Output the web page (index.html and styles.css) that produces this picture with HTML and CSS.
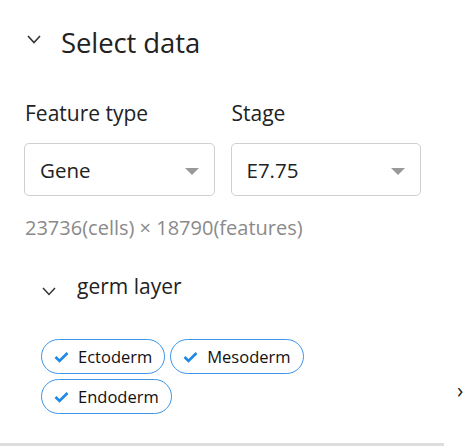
FILE: index.html
```html
<!DOCTYPE html>
<html>
<head>
<meta charset="utf-8">
<link rel="stylesheet" href="styles.css">
</head>
<body>
<div class="panel">
  <div class="header">
    <svg class="chev" width="14" height="9" viewBox="0 0 14 9"><path d="M1 1 L7 7.5 L13 1" fill="none" stroke="#333" stroke-width="1.6"/></svg>
    <span class="title">Select data</span>
  </div>
  <div class="fields">
    <div class="field">
      <div class="label">Feature type</div>
      <div class="select"><span>Gene</span><span class="caret"></span></div>
    </div>
    <div class="field">
      <div class="label">Stage</div>
      <div class="select"><span>E7.75</span><span class="caret"></span></div>
    </div>
  </div>
  <div class="dims">23736(cells) × 18790(features)</div>
  <div class="sub">
    <svg class="chev2" width="14" height="9" viewBox="0 0 14 9"><path d="M1 1 L7 7.5 L13 1" fill="none" stroke="#333" stroke-width="1.5"/></svg>
    <span class="subtitle">germ layer</span>
  </div>
  <div class="chips">
    <div class="chip"><svg width="15" height="12" viewBox="0 0 15 12"><path d="M1.5 6 L5.5 10 L13.5 2" fill="none" stroke="#1e88e5" stroke-width="2.6"/></svg><span>Ectoderm</span></div>
    <div class="chip"><svg width="15" height="12" viewBox="0 0 15 12"><path d="M1.5 6 L5.5 10 L13.5 2" fill="none" stroke="#1e88e5" stroke-width="2.6"/></svg><span>Mesoderm</span></div>
    <div class="chip"><svg width="15" height="12" viewBox="0 0 15 12"><path d="M1.5 6 L5.5 10 L13.5 2" fill="none" stroke="#1e88e5" stroke-width="2.6"/></svg><span>Endoderm</span></div>
  </div>
  <span class="stray">›</span>
</div>
<div class="bottom-line"></div>
</body>
</html>
```
FILE: styles.css
```css
html, body {
  margin: 0;
  padding: 0;
  background: #fff;
  width: 464px;
  height: 446px;
  overflow: hidden;
  font-family: "Open Sans", "Noto Sans", sans-serif;
  color: #222;
}
.panel {
  position: relative;
  height: 443px;
  padding-left: 24px;
  box-sizing: border-box;
}
.header {
  display: flex;
  align-items: center;
  height: 84px;
}
.chev {
  margin-left: 3px;
  margin-top: -5px;
}
.title {
  margin-left: 20px;
  font-size: 27.5px;
  color: #222;
  letter-spacing: -0.1px;
}
.fields {
  display: flex;
  gap: 16px;
  padding-top: 15px;
}
.field {
  width: 190.5px;
}
.label {
  font-size: 21px;
  line-height: 28px;
  padding-left: 1px;
  color: #222;
}
.select {
  margin-top: 16px;
  height: 53px;
  box-sizing: border-box;
  border: 1px solid #cfcfcf;
  border-radius: 5px;
  display: flex;
  align-items: center;
  justify-content: space-between;
  padding: 0 15px 0 15px;
  font-size: 20.5px;
  color: #222;
}
.caret {
  width: 0;
  height: 0;
  border-left: 7px solid transparent;
  border-right: 7px solid transparent;
  border-top: 7px solid #999;
  margin-top: 3px;
}
.dims {
  margin-top: 20px;
  font-size: 20px;
  line-height: 24px;
  color: #8a8a8a;
  padding-left: 1px;
}
.sub {
  display: flex;
  align-items: center;
  margin-top: 32px;
  height: 28px;
  padding-left: 18px;
}
.chev2 {
  margin-top: 10px;
}
.subtitle {
  margin-left: 21px;
  font-size: 21px;
  line-height: 28px;
  color: #222;
}
.chips {
  display: flex;
  flex-wrap: wrap;
  gap: 5px;
  width: 300px;
  margin-top: 39px;
  padding-left: 17px;
}
.chip {
  display: flex;
  align-items: center;
  height: 35px;
  box-sizing: border-box;
  border: 1px solid #3d95e8;
  border-radius: 18px;
  padding: 0 12px 0 12px;
  font-size: 16.5px;
  color: #111;
}
.chip svg {
  margin-right: 9px;
}
.stray {
  position: absolute;
  left: 457px;
  top: 376px;
  font-size: 21px;
  color: #222;
}
.bottom-line {
  width: 444px;
  height: 3px;
  background: #dddddd;
}
```
